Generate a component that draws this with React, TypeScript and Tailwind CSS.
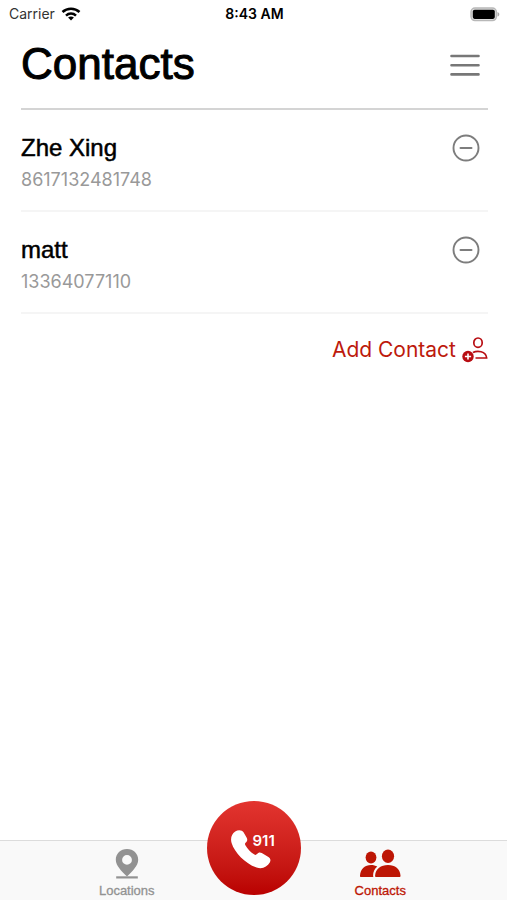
const contacts = [
  { name: "Zhe Xing", phone: "8617132481748" },
  { name: "matt", phone: "13364077110" },
]

function StatusBar() {
  return (
    <div className="grid h-7 grid-cols-3 items-center pl-[9px] pr-[7px] text-sm leading-5 text-black">
      <div className="flex items-center gap-[6px] text-[#333]">
        <span>Carrier</span>
        <svg width="20" height="14" viewBox="0 0 20 14" fill="none" stroke="#000" strokeWidth="2.500" aria-hidden="true">
          <path d="M1.500 5c4.700-4.400 12.300-4.400 17 0" />
          <path d="M5 8.600c2.800-2.700 7.200-2.700 10 0" />
          <path d="m10 13.500-2.900-2.900c1.700-1.500 4.100-1.500 5.800 0Z" fill="#000" stroke="none" />
        </svg>
      </div>
      <div className="text-center font-semibold">8:43 AM</div>
      <svg className="justify-self-end" width="30" height="15" viewBox="0 0 30 15" aria-hidden="true">
        <rect x="1" y="1" width="25.400" height="12.600" rx="4" fill="#ddd" stroke="#b8b8b8" strokeWidth="1.400" />
        <rect x="2.800" y="2.700" width="22" height="9.200" rx="1.800" fill="#000" />
        <path d="M27.500 5c2.400.8 2.400 3.800 0 4.600Z" fill="#aaa" />
      </svg>
    </div>
  )
}

function ContactRow({ name, phone }: { name: string; phone: string }) {
  return (
    <li className="flex items-start justify-between border-b-2 border-[#f5f5f5] pt-6 pb-[18px]">
      <div>
        <h2 className="font-['Liberation_Sans',Arial,sans-serif] text-2xl leading-7 text-black [-webkit-text-stroke:0.5px_#000]">
          {name}
        </h2>
        <p className="pt-[6px] text-lg leading-6 text-[#999]">{phone}</p>
      </div>
      <button type="button" aria-label={`Remove ${name}`} className="mr-2">
        <svg width="28" height="28" viewBox="0 0 28 28" fill="none" stroke="#7d7d7d" strokeLinecap="round">
          <circle cx="14" cy="14" r="12.500" strokeWidth="1.900" />
          <path d="M8.500 14h11" strokeWidth="2" />
        </svg>
      </button>
    </li>
  )
}

function AddContactIcon() {
  return (
    <svg width="26" height="26" viewBox="0 0 26 26" fill="none" stroke="#b80d12" strokeWidth="1.700" aria-hidden="true">
      <ellipse cx="16" cy="5.700" rx="4.200" ry="4.700" />
      <path d="M11 15.600c4-2.300 13-1.800 13.700 5.400H13.500" strokeLinejoin="round" />
      <circle cx="6" cy="19.500" r="5.700" fill="#b80d12" stroke="none" />
      <path d="M6 16.400v6.200M2.900 19.500h6.200" stroke="#fff" strokeWidth="1.600" />
    </svg>
  )
}

function TabBar() {
  return (
    <nav className="relative grid h-[60px] grid-cols-2 border-t border-[#dcdcdc] bg-[#f9f9f9] font-['Liberation_Sans',Arial,sans-serif] text-[13px] leading-4">
      <a href="#locations" className="flex flex-col items-center gap-[3px] pt-2 text-[#929292]">
        <svg width="24" height="31" viewBox="0 0 24 31" aria-hidden="true">
          <path
            fillRule="evenodd"
            fill="currentColor"
            d="M12 0C5.600 0 .8 4.700.8 10.800c0 6.200 5.700 11.200 11.200 16.700 5.500-5.500 11.200-10.500 11.200-16.700C23.200 4.700 18.400 0 12 0Zm0 6a4.900 4.900 0 1 1 0 9.800A4.900 4.900 0 0 1 12 6Z"
          />
          <path d="M1.200 28.400h21.600" stroke="currentColor" strokeWidth="2.200" />
        </svg>
        <span className="[-webkit-text-stroke:0.3px_#929292]">Locations</span>
      </a>
      <a href="#contacts" className="flex flex-col items-center gap-[3px] pt-2 text-[#bd1605]" aria-current="page">
        <svg width="42" height="31" viewBox="0 0 42 31" fill="currentColor" aria-hidden="true">
          <ellipse cx="12" cy="8.500" rx="5.400" ry="5.900" />
          <path d="M2.300 28C1.200 28 .9 27.500 1 26.500 1.500 20 6 16 12 16c2.500 0 4.500.5 6.300 1.600-2.600 2.200-4.300 5.700-4.200 9 0 .6.100 1 .3 1.400Z" />
          <ellipse cx="29" cy="7.300" rx="6.100" ry="6.800" />
          <path d="M17.500 28c-1.200 0-1.500-.6-1.400-1.600.6-6.700 5.700-10.400 12.900-10.400s12 3.700 12.500 10.400c.1 1-.3 1.600-1.400 1.600Z" />
        </svg>
        <span className="[-webkit-text-stroke:0.3px_#bd1605]">Contacts</span>
      </a>
      <button
        type="button"
        aria-label="Call 911"
        className="absolute -top-10 left-1/2 size-[94px] -translate-x-1/2 rounded-full bg-linear-to-b from-[#e3342f] to-[#b90000] text-white"
      >
        <svg className="absolute top-[29px] left-6" width="40" height="40" viewBox="0 0 40 40" fill="#fff" aria-hidden="true">
          <path d="M4.200 1.500C7.200-.6 11-.3 12.700 2.500l3 5.300c1 1.800.6 3.600-.9 4.700-1 .8-1 1.600-.4 2.700 2.300 4.100 5.200 7 9 9.300 1 .6 1.800.5 2.600-.4 1.300-1.600 2.900-2.100 4.800-1l6.200 3.600c2.400 1.400 3.100 3.500 1.800 5.900-2.600 4.700-7.700 6.700-13.200 4.900C15 34.200 3.500 22.700.6 13-.8 8.200.6 3.900 4.200 1.500Z" />
        </svg>
        <span className="absolute top-8 left-[46px] font-['Inter',sans-serif] text-[15px] leading-4 font-semibold">
          911
        </span>
      </button>
    </nav>
  )
}

export default function App() {
  return (
    <div className="flex min-h-screen flex-col bg-white font-['Inter',sans-serif]">
      <StatusBar />
      <main className="flex-1 pr-[19px] pl-[21px]">
        <header className="flex items-start justify-between border-b-2 border-[#d4d4d4] pt-3 pb-5">
          <h1 className="font-['Liberation_Sans',Arial,sans-serif] text-[44px] leading-12 text-black [-webkit-text-stroke:1px_#000]">
            Contacts
          </h1>
          <button type="button" aria-label="Menu" className="mt-[13px] mr-2">
            <svg width="30" height="24" viewBox="0 0 30 24" stroke="#777" strokeWidth="2.600" strokeLinecap="round">
              <path d="M1.500 3h27M1.500 12.200h27M1.500 21.400h27" />
            </svg>
          </button>
        </header>
        <ul>
          {contacts.map((contact) => (
            <ContactRow key={contact.phone} {...contact} />
          ))}
        </ul>
        <div className="flex justify-end pt-[22px]">
          <button type="button" className="flex items-center gap-[6px] text-[21px] leading-7 text-[#bd1a0c]">
            Add Contact
            <AddContactIcon />
          </button>
        </div>
      </main>
      <TabBar />
    </div>
  )
}
